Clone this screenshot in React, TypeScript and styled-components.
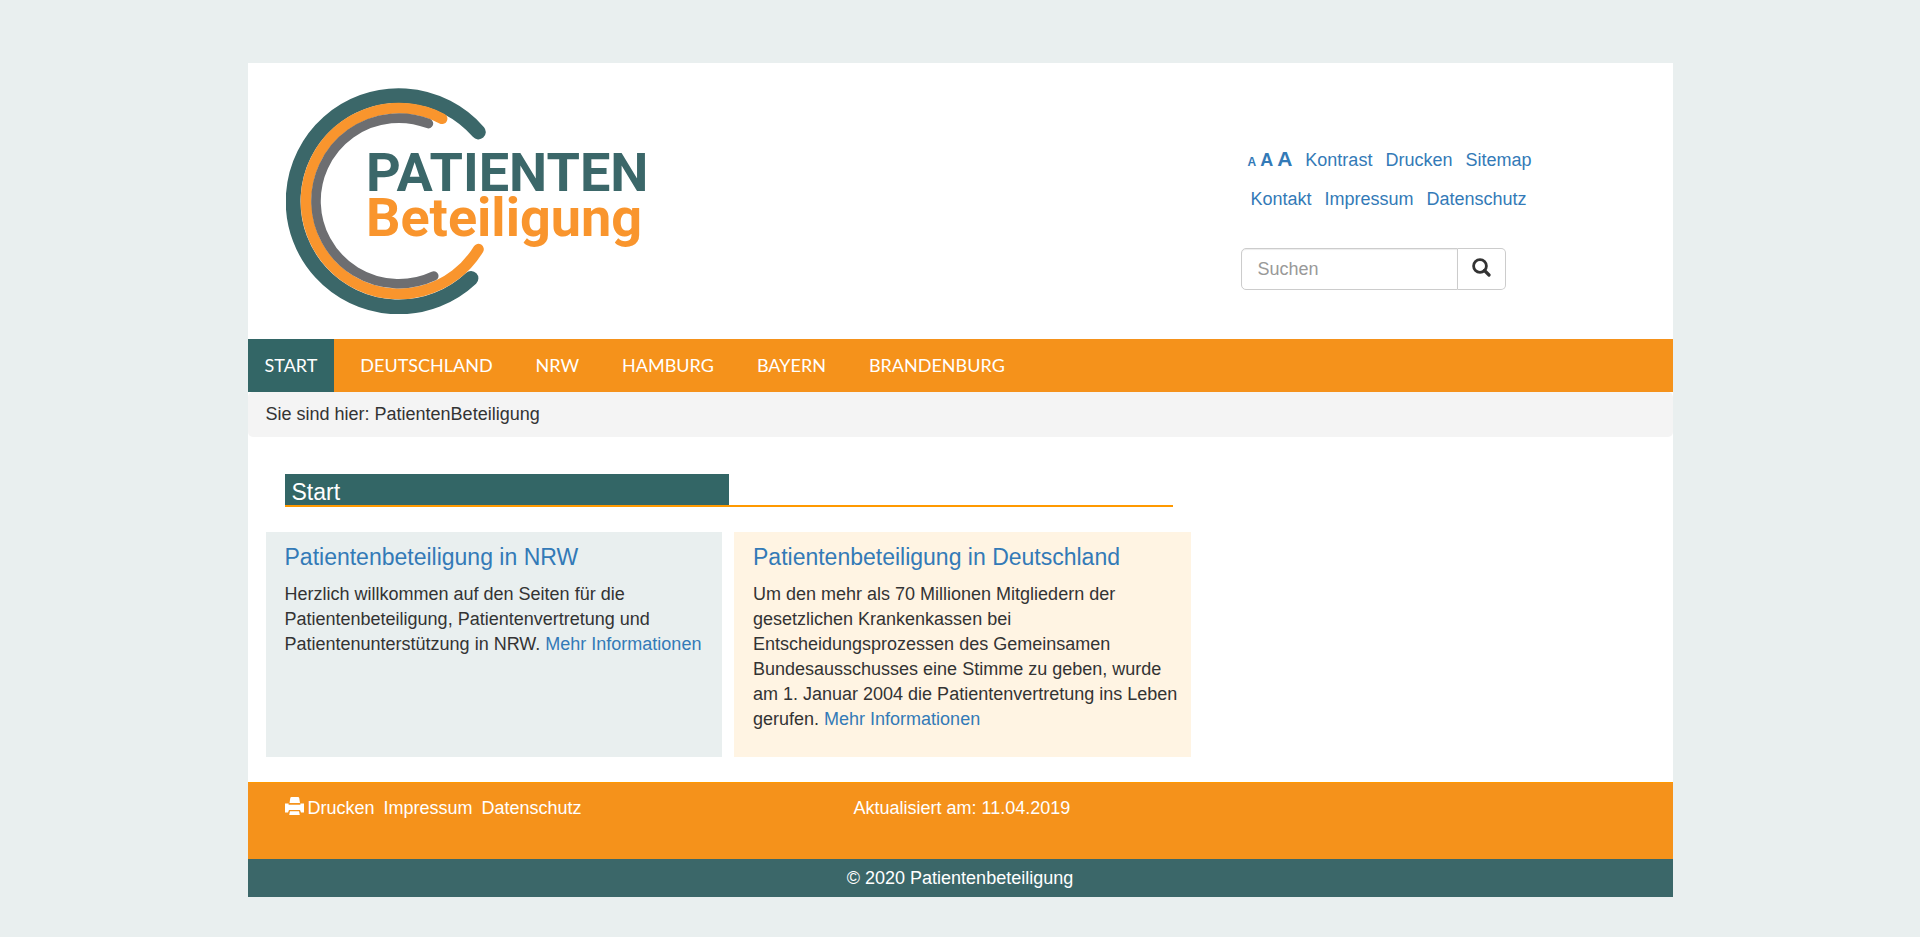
import React from "react";
import styled, { createGlobalStyle } from "styled-components";

const colors = {
  page: "#e9efef",
  teal: "#336666",
  logoTeal: "#3b6769",
  orange: "#f5921b",
  logoOrange: "#f9952d",
  gray: "#6d6e71",
  link: "#337ab7",
  text: "#333333",
};

const GlobalStyle = createGlobalStyle`
  *, *::before, *::after { box-sizing: border-box; }
  body {
    margin: 0;
    background: ${colors.page};
    color: ${colors.text};
    font-family: "Liberation Sans", Arial, sans-serif;
    font-size: 18px;
    line-height: 25px;
  }
  a { color: ${colors.link}; text-decoration: none; }
  a:hover { text-decoration: underline; }
  h1, h2, p, ul { margin: 0; padding: 0; font-weight: 400; }
`;

const Page = styled.div`
  width: 100%;
  max-width: 1425px;
  margin: 63px auto 40px;
  background: #fff;
`;

const Header = styled.header`
  display: flex;
  justify-content: space-between;
  padding: 25px 132px 25px 38px;
`;

const LogoLink = styled.a`
  display: block;
  line-height: 0;
`;

const LogoText = styled.text`
  font-family: Roboto, sans-serif;
  font-weight: 700;
`;

const Tools = styled.div`
  width: 300px;
  padding-top: 60px;
`;

const ToolRow = styled.ul<{ $indent: number }>`
  display: flex;
  align-items: baseline;
  gap: 13px;
  padding-left: ${(p) => p.$indent}px;
  margin-bottom: 14px;
  list-style: none;
`;

const FontSizes = styled.li`
  display: flex;
  align-items: baseline;
  gap: 4px;
`;

const SizeButton = styled.button<{ $size: number; $weight: number }>`
  padding: 0;
  border: 0;
  background: none;
  color: ${colors.link};
  font-family: inherit;
  font-size: ${(p) => p.$size}px;
  font-weight: ${(p) => p.$weight};
  line-height: 20px;
  cursor: pointer;
`;

const Search = styled.form`
  display: flex;
  width: 265px;
  height: 42px;
  margin-top: 36px;
`;

const SearchInput = styled.input`
  flex: 1;
  min-width: 0;
  padding: 6px 16px;
  border: 1px solid #ccc;
  border-radius: 5px 0 0 5px;
  box-shadow: inset 0 1px 1px rgba(0, 0, 0, 0.075);
  font: inherit;
  color: #555;
  &::placeholder { color: #999; opacity: 1; }
`;

const SearchButton = styled.button`
  display: flex;
  align-items: center;
  justify-content: center;
  width: 48px;
  padding: 0 0 4px;
  border: 1px solid #ccc;
  border-left: 0;
  border-radius: 0 5px 5px 0;
  background: #fff;
  cursor: pointer;
`;

const Nav = styled.nav`
  background: ${colors.orange};
`;

const NavList = styled.ul`
  display: flex;
  gap: 9px;
  list-style: none;
`;

const NavLink = styled.a<{ $active?: boolean }>`
  display: block;
  padding: 14px 17px;
  color: #fff;
  background: ${(p) => (p.$active ? colors.teal : "transparent")};
  font-family: Lato, sans-serif;
  font-size: 18px;
`;

const Breadcrumb = styled.div`
  padding: 10px 18px;
  border-radius: 5px;
  background: #f4f4f4;
`;

const Main = styled.main`
  width: 66.6667%;
  padding: 37px 7px 25px 18px;
`;

const TitleBar = styled.div`
  margin: 0 18px 25px 19px;
  border-bottom: 2px solid #ff9900;
`;

const Title = styled.h1`
  width: 50%;
  padding: 5px 7px 0;
  background: ${colors.teal};
  color: #fff;
  font-size: 23px;
  line-height: 26px;
`;

const Cards = styled.div`
  display: grid;
  grid-template-columns: 1fr 1fr;
  gap: 12px;
`;

const Card = styled.article<{ $bg: string }>`
  min-height: 225px;
  padding: 12px 12px 25px 19px;
  background: ${(p) => p.$bg};
`;

const CardTitle = styled.h2`
  margin-bottom: 12px;
  font-size: 23px;
  line-height: 26px;
`;

const Footer = styled.footer`
  display: grid;
  grid-template-columns: 41% 1fr;
  min-height: 77px;
  padding: 13px 0 12px 37px;
  border-top: 1px solid #ff9900;
  background: ${colors.orange};
  color: #fff;
`;

const FooterLinks = styled.ul`
  display: flex;
  gap: 9px;
  list-style: none;
`;

const FooterLink = styled.a`
  display: flex;
  align-items: flex-start;
  gap: 4px;
  color: #fff;
`;

const Copyright = styled.div`
  padding: 7px 0 6px;
  background: ${colors.logoTeal};
  color: #fff;
  text-align: center;
`;

const Logo = () => (
  <svg width="366" height="226" viewBox="0 0 366 226" role="img" aria-label="PatientenBeteiligung">
    <g fill="none" strokeLinecap="round">
      <path d="M192.4 44A105.6 105.6 0 1 0 185 190.3" stroke={colors.logoTeal} strokeWidth="14.8" />
      <path d="M156 30.7A92.9 92.9 0 1 0 192.4 161.2" stroke={colors.logoOrange} strokeWidth="10.8" />
      <path d="M142.4 35.6A82.8 82.8 0 1 0 147.7 188" stroke={colors.gray} strokeWidth="9.6" />
    </g>
    <LogoText x="80" y="103" fontSize="54" fill={colors.logoTeal}>PATIENTEN</LogoText>
    <LogoText x="80" y="148" fontSize="54" fill={colors.logoOrange}>Beteiligung</LogoText>
  </svg>
);

const SearchIcon = () => (
  <svg width="19" height="19" viewBox="0 0 19 19" fill="none" stroke="#333" aria-hidden="true">
    <circle cx="8" cy="8" r="6.4" strokeWidth="2.8" />
    <path d="M12.5 12.5L17 17" strokeWidth="3.2" strokeLinecap="round" />
  </svg>
);

const PrintIcon = () => (
  <svg width="19" height="19" viewBox="0 0 19 19" fill="#fff" aria-hidden="true">
    <path d="M6.500 1h6.500q1 0 1.200 1l.8 5H4.500l.8-5q.2-1 1.200-1z" />
    <path d="M0 7.500h3.600v1.300h11.800V7.500H19v9h-3l-1-2.500H4l-1 2.500H0z" />
    <path d="M5 15.300h9l.8 3.700H4.200z" />
  </svg>
);

const navItems = ["START", "DEUTSCHLAND", "NRW", "HAMBURG", "BAYERN", "BRANDENBURG"];

export default function App() {
  return (
    <>
      <GlobalStyle />
      <Page>
        <Header>
          <LogoLink href="#"><Logo /></LogoLink>
          <Tools>
            <ToolRow $indent={7}>
              <FontSizes>
                <SizeButton $size={12} $weight={700} aria-label="Schrift klein">A</SizeButton>
                <SizeButton $size={18} $weight={700} aria-label="Schrift mittel">A</SizeButton>
                <SizeButton $size={21} $weight={700} aria-label="Schrift groß">A</SizeButton>
              </FontSizes>
              {["Kontrast", "Drucken", "Sitemap"].map((t) => <li key={t}><a href="#">{t}</a></li>)}
            </ToolRow>
            <ToolRow $indent={10}>
              {["Kontakt", "Impressum", "Datenschutz"].map((t) => <li key={t}><a href="#">{t}</a></li>)}
            </ToolRow>
            <Search role="search">
              <SearchInput type="search" placeholder="Suchen" aria-label="Suchen" />
              <SearchButton type="button" aria-label="Suche starten"><SearchIcon /></SearchButton>
            </Search>
          </Tools>
        </Header>
        <Nav>
          <NavList>
            {navItems.map((t, i) => (
              <li key={t}><NavLink href="#" $active={i === 0}>{t}</NavLink></li>
            ))}
          </NavList>
        </Nav>
        <Breadcrumb>Sie sind hier: PatientenBeteiligung</Breadcrumb>
        <Main>
          <TitleBar><Title>Start</Title></TitleBar>
          <Cards>
            <Card $bg={colors.page}>
              <CardTitle><a href="#">Patientenbeteiligung in NRW</a></CardTitle>
              <p>
                Herzlich willkommen auf den Seiten für die Patientenbeteiligung, Patientenvertretung
                und Patientenunterstützung in NRW. <a href="#">Mehr Informationen</a>
              </p>
            </Card>
            <Card $bg="#fff4e3">
              <CardTitle><a href="#">Patientenbeteiligung in Deutschland</a></CardTitle>
              <p>
                Um den mehr als 70 Millionen Mitgliedern der gesetzlichen Krankenkassen bei
                Entscheidungsprozessen des Gemeinsamen Bundesausschusses eine Stimme zu geben, wurde
                am 1. Januar 2004 die Patientenvertretung ins Leben gerufen.{" "}
                <a href="#">Mehr Informationen</a>
              </p>
            </Card>
          </Cards>
        </Main>
        <Footer>
          <FooterLinks>
            <li><FooterLink href="#"><PrintIcon />Drucken</FooterLink></li>
            <li><FooterLink href="#">Impressum</FooterLink></li>
            <li><FooterLink href="#">Datenschutz</FooterLink></li>
          </FooterLinks>
          <p>Aktualisiert am: 11.04.2019</p>
        </Footer>
        <Copyright>© 2020 Patientenbeteiligung</Copyright>
      </Page>
    </>
  );
}
